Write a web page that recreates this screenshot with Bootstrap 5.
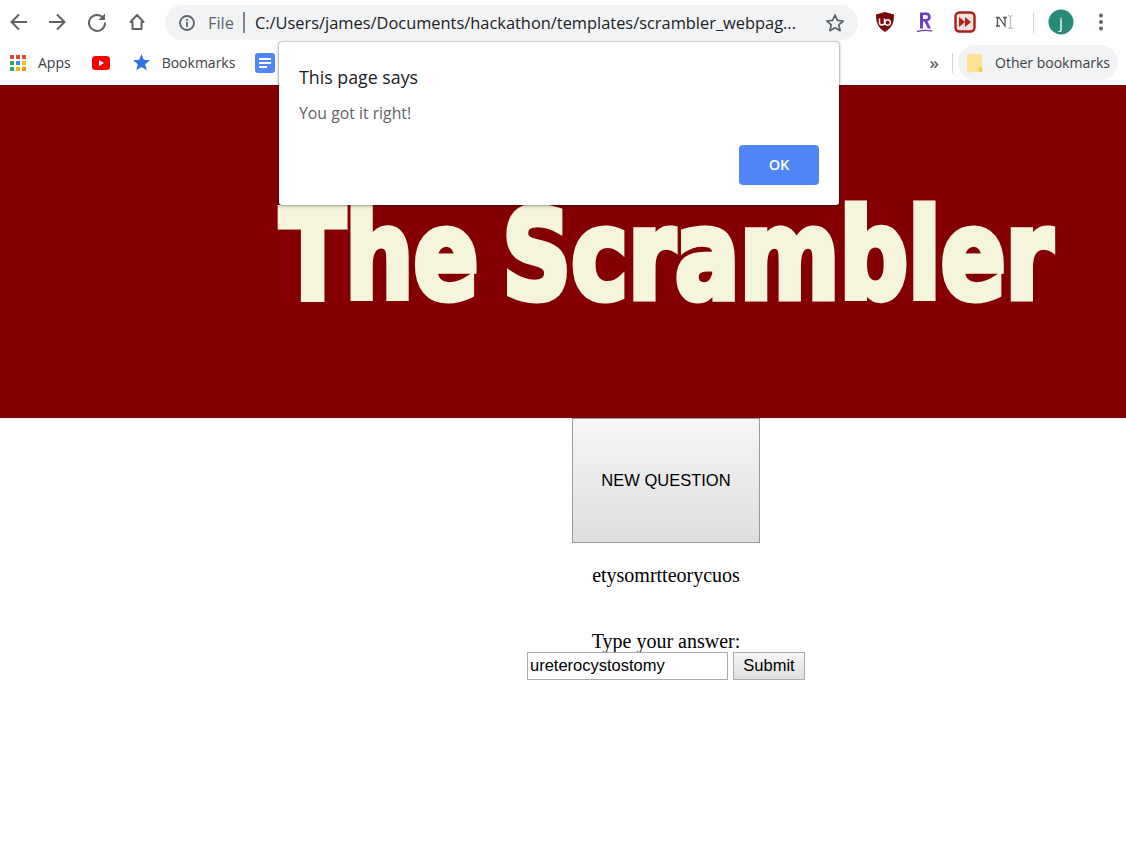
<!DOCTYPE html>
<html lang="en"><head><meta charset="utf-8"><title>The Scrambler</title>
<link href="https://cdn.jsdelivr.net/npm/bootstrap@5.3.0/dist/css/bootstrap.min.css" rel="stylesheet">
<style>
html,body{height:100%;}
body{background:#fff;font-family:"Liberation Serif",serif;color:#000;width:1126px;height:856px;overflow:hidden;position:relative;}
.tabar{height:45px;}
.navico{width:40px;height:40px;margin-top:2px;flex:none;}
.navfirst{width:37px;}
.omni{margin-left:8px;width:693px;height:35px;background:#f1f3f4;border-radius:18px;margin-top:5px;font:16.4px "Open Sans","Noto Sans",sans-serif;color:#202124;white-space:nowrap;}
.omni .fl{color:#5f6368;margin-left:13px;}
.infoi{margin-left:14px;flex:none;}
.stari{margin-left:auto;margin-right:13px;flex:none;}
.sep{width:2px;height:21px;background:#80868b;margin:0 10px 0 9px;flex:none;}
.exts{margin-left:7px;}
.ext{width:40px;height:40px;margin-top:2px;}
.extsep{margin-left:8px;margin-right:7px;}
.bookbar{height:40px;padding-bottom:5px;font:14px "Open Sans","Noto Sans",sans-serif;color:#3c4043;}
.bm{white-space:nowrap;}
.appsb{margin-left:10px;}
.lab{margin-left:12px;}
.ytb{margin-left:21px;}
.bkb{margin-left:23px;}
.docb{margin-left:20px;}
.chev{margin-left:auto;color:#5f6368;font-size:17px;font-weight:600;line-height:1;margin-right:13px;}
.other{height:35px;background:#f1f3f4;border-radius:18px;width:160px;white-space:nowrap;margin-left:5px;margin-right:8px;}
.foldi{margin-left:9px;}
.vr2{width:1px;height:20px;background:#d3d5d8;display:block;}
.hero{height:333px;background:#840000;border-top:1px solid #6d0000;overflow:hidden;}
.ttl{font-family:"DejaVu Sans",sans-serif;font-weight:700;color:#f5f5dc;font-size:123px;line-height:1;-webkit-text-stroke:7px #f5f5dc;word-spacing:-12px;white-space:nowrap;margin:0;padding:108px 0 0 0;margin-left:280px;width:max-content;transform:scaleX(.778);transform-origin:left top;}
.stage{margin-left:206px;width:920px;}
.newq{width:188px;height:125px;border:1px solid #999;background:linear-gradient(#f6f6f6,#dedede);font:16.5px "Liberation Sans",sans-serif;color:#000;padding:0;}
.scr{font-size:20px;line-height:22px;margin-top:21px;}
.lbl{font-size:20px;line-height:22px;margin-top:44px;}
.inp{width:201px;height:28px;border:1px solid #aaa;font:16.5px "Liberation Sans",sans-serif;padding:0 2px 2px;color:#000;}
.sub{width:72px;height:28px;border:1px solid #aaa;background:linear-gradient(#f6f6f6,#dedede);font:16.5px "Liberation Sans",sans-serif;padding:0 0 2px;color:#000;margin-left:5px;}
.dlg{position:absolute;left:279px;top:42px;width:560px;height:163px;background:#fff;border-radius:3px;box-shadow:0 0 2px rgba(0,0,0,.55),0 1px 4px rgba(0,0,0,.25);padding:23px 20px 20px;font-family:"Open Sans","Noto Sans",sans-serif;}
.dlgt{font-size:17.8px;line-height:24px;color:#202124;}
.dlgm{font-size:15.8px;line-height:22px;color:#5f6368;margin-top:13px;}
.okb{width:80px;height:40px;background:#5186f8;color:#fff;border:0;border-radius:4px;font-size:14.5px;font-weight:600;padding:0;margin-top:21px;}
</style></head><body>
<div class="tabar d-flex">
 <div class="navico navfirst d-flex align-items-center justify-content-center"><svg width="20" height="20" viewBox="0 0 20 20" fill="none" stroke="#5f6368" stroke-width="2"><path d="M18 10H3M10 2.500L2.500 10L10 17.500"/></svg></div>
 <div class="navico d-flex align-items-center justify-content-center"><svg width="20" height="20" viewBox="0 0 20 20" fill="none" stroke="#5f6368" stroke-width="2"><path d="M2 10H17M10 2.500L17.500 10L10 17.500"/></svg></div>
 <div class="navico d-flex align-items-center justify-content-center"><svg width="20" height="20" viewBox="0 0 20 20" fill="none" stroke="#5f6368" stroke-width="2"><path d="M16.500 6.200A8 8 0 1 0 18 10.500"/><path d="M18 1.500V8H11.500Z" fill="#5f6368" stroke="none"/></svg></div>
 <div class="navico d-flex align-items-center justify-content-center"><svg width="20" height="20" viewBox="0 0 20 20" fill="none" stroke="#5f6368" stroke-width="2"><path d="M3.500 10L10 3L16.500 10H14.500V17H5.500V10Z" stroke-linejoin="round"/></svg></div>
 <div class="omni d-flex align-items-center">
  <svg class="infoi" width="16" height="16" viewBox="0 0 16 16"><circle cx="8" cy="8" r="7" fill="none" stroke="#5f6368" stroke-width="1.800"/><rect x="7.100" y="7" width="1.800" height="5" fill="#5f6368"/><rect x="7.100" y="4" width="1.800" height="1.800" fill="#5f6368"/></svg>
  <span class="fl">File</span><span class="sep"></span><span>C:/Users/james/Documents/hackathon/templates/scrambler_webpag...</span>
  <svg class="stari" width="20" height="20" viewBox="0 0 20 20"><path d="M10 2l2.400 5.400 5.800.6-4.400 3.900 1.300 5.800L10 14.800l-5.100 2.900 1.300-5.800L1.800 8l5.800-.6z" fill="none" stroke="#5f6368" stroke-width="1.700" stroke-linejoin="round"/></svg>
 </div>
 <div class="exts d-flex">
  <div class="ext d-flex align-items-center justify-content-center"><svg width="20" height="22" viewBox="0 0 20 22"><path d="M1 3.500L10 1l9 2.500c0 8-1.500 13-9 17.500C2.500 16.500 1 11.500 1 3.500z" fill="#7b0a0a"/><path d="M4.500 7.500v4a2.500 2.500 0 0 0 5 0v-4M10 11.500a2.700 2.700 0 1 0 5.400 0a2.700 2.700 0 1 0-5.400 0" fill="none" stroke="#fff" stroke-width="1.500"/></svg></div>
  <div class="ext d-flex align-items-center justify-content-center"><svg width="20" height="24" viewBox="0 0 20 24"><path d="M5 2.500H11.500a4.500 4.500 0 0 1 1 8.800L16 18.500H12.800L9.500 11.500H8V18.500H5ZM8 5V9H11a2 2 0 0 0 0-4Z" fill="#6f3fc0"/><path d="M2 21.500Q10 19.500 17 21" fill="none" stroke="#6f3fc0" stroke-width="1.400"/></svg></div>
  <div class="ext d-flex align-items-center justify-content-center"><svg width="22" height="22" viewBox="0 0 22 22"><rect x="1.500" y="1.500" width="19" height="19" rx="4" fill="#f3e3e0" stroke="#a8201a" stroke-width="2.400"/><path d="M5 6l6 5-6 5zM11 6l6 5-6 5z" fill="#b3211b"/></svg></div>
  <div class="ext d-flex align-items-center justify-content-center"><svg width="22" height="20" viewBox="0 0 22 20"><path d="M2 5.500H5L11 14V5.500M2 14H6M3.500 5.500V14M9 5.500H13" fill="none" stroke="#555" stroke-width="1.300"/><path d="M14 3.500Q16 3.500 16.500 5V15Q16 16.500 14 16.500M19 3.500Q17 3.500 16.500 5M16.500 15Q17 16.500 19 16.500" fill="none" stroke="#bbb" stroke-width="1.200"/></svg></div>
  <div class="extsep d-flex align-items-center"><span class="vr2"></span></div>
  <div class="ext d-flex align-items-center justify-content-center"><svg width="26" height="26" viewBox="0 0 26 26"><circle cx="13" cy="13" r="12.500" fill="#2a8a7a"/><text x="13" y="18.500" text-anchor="middle" font-family="Open Sans" font-size="15" fill="#fff">j</text></svg></div>
  <div class="ext d-flex align-items-center justify-content-center"><svg width="6" height="18" viewBox="0 0 6 18" fill="#5f6368"><circle cx="3" cy="2.500" r="2"/><circle cx="3" cy="9" r="2"/><circle cx="3" cy="15.500" r="2"/></svg></div>
 </div>
</div>
<div class="bookbar d-flex align-items-center">
 <div class="bm appsb d-flex align-items-center"><svg width="16" height="16" viewBox="0 0 16 16"><rect x="0" y="0" width="4" height="4" fill="#ea4335"/><rect x="6" y="0" width="4" height="4" fill="#ea4335"/><rect x="12" y="0" width="4" height="4" fill="#ea4335"/><rect x="0" y="6" width="4" height="4" fill="#34a853"/><rect x="6" y="6" width="4" height="4" fill="#4285f4"/><rect x="12" y="6" width="4" height="4" fill="#fbbc04"/><rect x="0" y="12" width="4" height="4" fill="#34a853"/><rect x="6" y="12" width="4" height="4" fill="#fbbc04"/><rect x="12" y="12" width="4" height="4" fill="#f29900"/></svg><span class="lab">Apps</span></div>
 <svg class="ytb" width="18" height="14" viewBox="0 0 18 14"><rect width="18" height="14" rx="3.500" fill="#f00"/><path d="M7 4l5 3-5 3z" fill="#fff"/></svg>
 <div class="bm bkb d-flex align-items-center"><svg width="17" height="17" viewBox="0 0 17 17"><path d="M8.500 0l2.300 5.800 6.200.4-4.800 4 1.600 6.100-5.300-3.400-5.300 3.400 1.600-6.100L0 6.200l6.200-.4z" fill="#2f74e6"/></svg><span class="lab">Bookmarks</span></div>
 <svg class="docb" width="20" height="20" viewBox="0 0 20 20"><rect width="20" height="20" rx="3" fill="#5186f8"/><path d="M4 6h12M4 10h12M4 14h8" stroke="#fff" stroke-width="2"/></svg>
 <span class="chev">»</span>
 <span class="vr2"></span>
 <div class="other d-flex align-items-center"><svg class="foldi" width="16" height="18" viewBox="0 0 16 18"><path d="M1.500 0H13a2 2 0 0 1 2 2v16H2a2 2 0 0 1-2-2V1.500z" fill="#fde293"/><rect x="11.500" y="13" width="4" height="5" rx="1.500" fill="#f3c84b"/></svg><span class="lab">Other bookmarks</span></div>
</div>
<header class="hero"><h1 class="ttl">The Scrambler</h1></header>
<main class="stage text-center">
 <button class="newq d-block mx-auto" type="button">NEW QUESTION</button>
 <p class="scr mb-0">etysomrtteorycuos</p>
 <p class="lbl mb-0">Type your answer:</p>
 <form class="d-flex justify-content-center"><input class="inp" type="text" value="ureterocystostomy"><button class="sub" type="button">Submit</button></form>
</main>
<div class="dlg" role="dialog">
 <div class="dlgt">This page says</div>
 <div class="dlgm">You got it right!</div>
 <div class="d-flex justify-content-end"><button class="okb" type="button">OK</button></div>
</div>
</body></html>
